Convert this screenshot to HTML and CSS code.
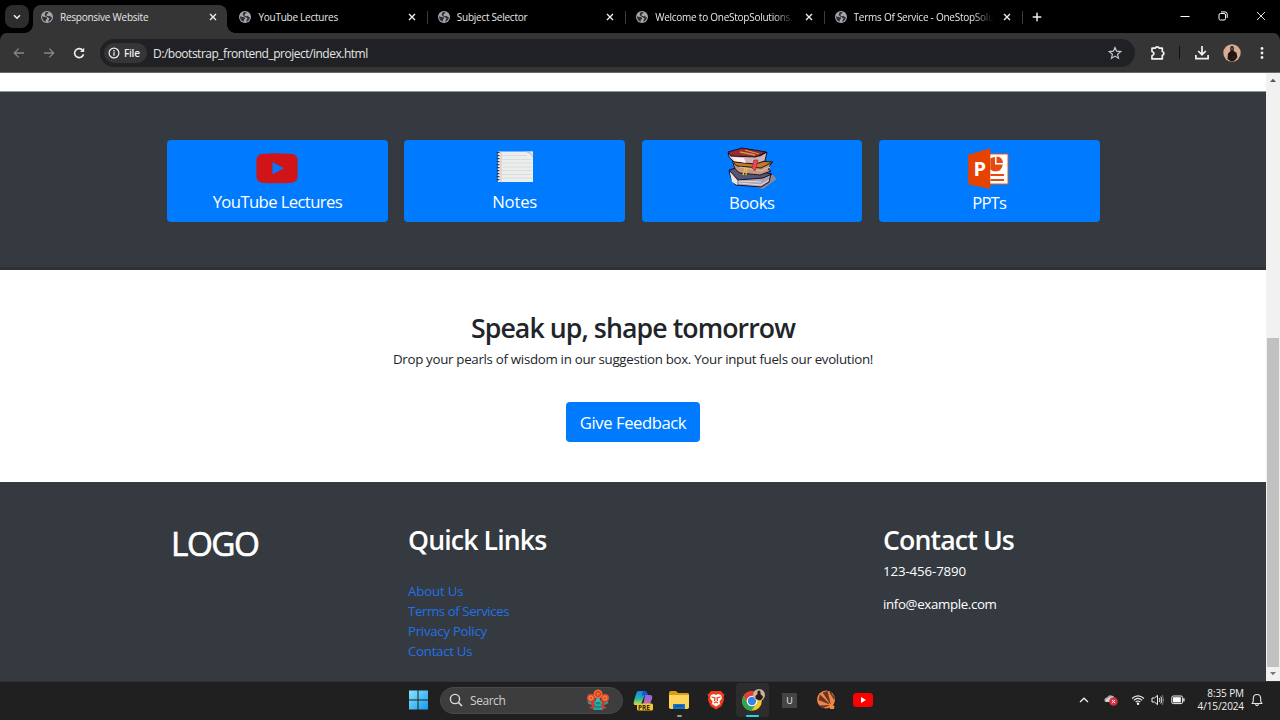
FILE: index.html
```html
<!DOCTYPE html>
<html lang="en">
<head>
<meta charset="utf-8">
<title>Responsive Website</title>
<link rel="stylesheet" href="styles.css">
</head>
<body>
<svg class="defs" aria-hidden="true">
  <symbol id="globe" viewBox="0 0 12 12"><circle cx="6" cy="6" r="6" fill="#a4a8ae"/><path d="M1 5.200 3.800 5.900 5.600 6.300 6.200 7.600 5 8.700 4.500 10.700C2.200 10 1 8.200 1 5.200ZM5 .9 7.600 1.200 7 2.600 5.800 3 5.500 4.600 7 5.200 9 4.700 9.700 6 11 6.500C10.600 8.800 9.100 10.300 7.200 10.900L7.800 8.600 8.500 7.500 6.800 6.200 4.700 5.300 3.700 4.100 4 2.200Z" fill="#303135"/></symbol>
  <symbol id="close" viewBox="0 0 8 8"><path d="M1 1 7 7M7 1 1 7" stroke="#eee" stroke-width="1.400"/></symbol>
</svg>
<header class="browser">
  <div class="tabbar">
    <button class="tab-search"><svg width="8" height="6" viewBox="0 0 8 6"><path d="M1 1.200 4 4.200 7 1.200" fill="none" stroke="#eee" stroke-width="1.600"/></svg></button>
    <div class="tabs">
      <div class="tab active"><svg class="fav"><use href="#globe"/></svg><span>Responsive Website</span><svg class="x"><use href="#close"/></svg></div>
      <div class="tab"><svg class="fav"><use href="#globe"/></svg><span>YouTube Lectures</span><svg class="x"><use href="#close"/></svg></div>
      <div class="tab"><svg class="fav"><use href="#globe"/></svg><span>Subject Selector</span><svg class="x"><use href="#close"/></svg></div>
      <div class="tab"><svg class="fav"><use href="#globe"/></svg><span class="fade">Welcome to OneStopSolutions.</span><svg class="x"><use href="#close"/></svg></div>
      <div class="tab"><svg class="fav"><use href="#globe"/></svg><span class="fade">Terms Of Service - OneStopSolu</span><svg class="x"><use href="#close"/></svg></div>
    </div>
    <svg class="plus" width="10" height="10" viewBox="0 0 10 10"><path d="M5 .7V9.300M.7 5H9.300" stroke="#eee" stroke-width="1.500"/></svg>
    <div class="window-controls">
      <svg width="10" height="10"><path d="M.5 5.500H9.500" stroke="#fff"/></svg>
      <svg width="10" height="10"><rect x="1" y="2.500" width="6.500" height="6.500" rx="1.500" fill="none" stroke="#fff"/><path d="M3 .9H7Q9.200.9 9.200 3V7" fill="none" stroke="#fff"/></svg>
      <svg width="10" height="10"><path d="M1 1 9 9M9 1 1 9" stroke="#ddd"/></svg>
    </div>
  </div>
  <div class="toolbar-back"><div class="toolbar">
    <svg class="nav" width="12" height="12" viewBox="0 0 12 12"><path d="M11 6H1.500M5.600 1.600 1.300 6 5.600 10.400" fill="none" stroke="#85868a" stroke-width="1.300"/></svg>
    <svg class="nav" width="12" height="12" viewBox="0 0 12 12"><path d="M1 6H10.500M6.400 1.600 10.700 6 6.400 10.400" fill="none" stroke="#85868a" stroke-width="1.300"/></svg>
    <svg class="nav" width="12" height="12" viewBox="0 0 12 12"><path d="M10 3.800A4.500 4.500 0 1 0 10.500 7.200" fill="none" stroke="#eee" stroke-width="1.600"/><path d="M11.200.8V5H7Z" fill="#eee"/></svg>
    <div class="omnibox">
      <span class="chip"><svg width="12" height="12" viewBox="0 0 12 12"><circle cx="6" cy="6" r="4.900" fill="none" stroke="#eee" stroke-width="1.200"/><path d="M6 5.300V8.800M6 3.100V4.400" stroke="#eee" stroke-width="1.300"/></svg><span>File</span></span>
      <span class="url">D:/bootstrap_frontend_project/index.html</span>
      <svg class="star" width="14" height="14" viewBox="0 0 14 14"><path d="M7 1.500 8.600 5.200 12.700 5.600 9.600 8.300 10.500 12.200 7 10.100 3.500 12.200 4.400 8.300 1.300 5.600 5.400 5.200Z" fill="none" stroke="#c6c7ca" stroke-width="1.200"/></svg>
    </div>
    <div class="actions">
      <svg width="16" height="16" viewBox="0 0 16 16"><path d="M2 3.200H5.200Q5.600 1.900 7.200 1.900T9.200 3.200H12.300V6.500Q13.900 7 13.900 8.400T12.300 10.200V13.900H2V10.700Q3.900 10.200 3.900 8.600T2 6.500Z" fill="none" stroke="#f1f1f1" stroke-width="1.700" stroke-linejoin="round"/></svg>
      <i class="divider"></i>
      <svg width="16" height="16" viewBox="0 0 16 16"><path d="M8 1V9M4.200 6 8 9.700 11.800 6M1.900 10V13.700H14.100V10" fill="none" stroke="#f1f1f1" stroke-width="1.700"/></svg>
      <svg class="avatar" width="18" height="18" viewBox="0 0 18 18"><circle cx="9" cy="9" r="8.700" fill="#d6ad91"/><path d="M7.200 4Q7.200 2 9 2T10.900 4L10.700 7 13.500 8.800 14.300 13Q12 17.500 8 17.500L4.500 15 5 9.500 7.500 7Z" fill="#211615"/><path d="M8 3.500H10.200V5.500L9 6.500 8 5.500Z" fill="#764836"/><path d="M6 12 9 13.500 12.500 11.800 10 14Z" fill="#553025"/></svg>
      <svg class="dots" width="4" height="14"><circle cx="2" cy="2.500" r="1.400" fill="#eee"/><circle cx="2" cy="7" r="1.400" fill="#eee"/><circle cx="2" cy="11.500" r="1.400" fill="#eee"/></svg>
    </div>
  </div></div>
</header>
<div class="viewport">
  <main>
    <section class="resources">
      <a class="card"><svg width="44" height="36" viewBox="0 0 44 36"><path fill-rule="evenodd" d="M7 4Q22 2.500 37 4 42.300 4.500 42.600 10V26.500Q42.300 32 37 32.700 22 34 7 32.700 1.700 32 1.400 26.500V10Q1.700 4.500 7 4ZM17.500 12.200V24.200L28.800 18.200Z" fill="#d01418"/></svg><span class="c1">YouTube Lectures</span></a>
      <a class="card"><svg class="notebook" width="44" height="36" viewBox="0 0 44 36"><path d="M5 1.500H36L40 5.500V32H5Z" fill="#eceeed"/><path d="M8 1.500V32" stroke="#e3a9a9" stroke-width=".8"/><path d="M9 5.500H34M9 9.500H39M9 13H39M9 17H39M9 20.500H39M9 24.500H39M9 28H39" stroke="#cbd2d2" stroke-width=".6"/><path d="M32 1.500H40V7.500Q38 3.500 32 1.500Z" fill="#bfc2c0"/><path d="M36 1.500H40V5.500Z" fill="#e6e8e7"/><path d="M5 2V32" stroke="#333b48" stroke-width="3" stroke-dasharray="1.200 1.800"/></svg><span>Notes</span></a>
      <a class="card tall"><svg width="50" height="44" viewBox="0 0 50 44"><path d="M34 39 45 27 49.500 32 36 42 28 40Z" fill="#8b8793"/><path d="M2 24 35 29 44 27 42 35 34 40 9 38Q5 36 2 24Z" fill="#aaa2b5" stroke="#171322"/><path d="M2 23 12 20 45 27 36 31 11 33Z" fill="#535675" stroke="#171322"/><path d="M3 25 10 33 10 38 5 35Z" fill="#eee3df"/><path d="M12 36 34 38 42 33M12 34 34 35" fill="none" stroke="#e5dbe0"/><path d="M6 15 34 18 45 15 41 22 44 24 33 28 13 26Q7 23 6 15Z" fill="#c79784" stroke="#241515"/><path d="M5 15 12 13 46 15 34 21 10 19Z" fill="#c57924" stroke="#271717"/><path d="M13 20 34 24 43 20" fill="none" stroke="#d5bcab" stroke-width="1.200"/><path d="M1 6 33 9 40 5 38 14 28 17 7 15Q1 11 1 6Z" fill="#cfb5bb" stroke="#1d1015"/><path d="M1 5 15 1 39 5 29 10 4 9Z" fill="#942d35" stroke="#250d12"/><path d="M4 10 17 11 19 16 8 14Z" fill="#fff1ef"/><path d="M18 3 32 7M13 5 28 8" stroke="#d99a40" stroke-width="1.300"/><path d="M27 13 31 13 28 24 25 21Z" fill="#ef4854" stroke="#992730" stroke-width=".7"/><path d="M18 21 16 28M20 21 19 28" stroke="#efc332" stroke-width="1.300"/></svg><span class="c3">Books</span></a>
      <a class="card"><svg class="powerpoint" width="44" height="44" viewBox="0 0 44 44"><path d="M22 7H41V37H22Z" fill="#fff" stroke="#e05a1b" stroke-width="1"/><path d="M1.200 7.700 23.300 1.200V42L1.200 37.200Z" fill="#e74300"/><path d="M23.300 11.500Q25.500 10 28 10V17.500H35.800Q35 24 28.500 24.500 25.500 24.500 23.300 22.500Z" fill="#e44b12"/><path d="M29.500 9.500Q35.500 9.800 36 16H29.500Z" fill="#e44b12"/><path d="M23.500 28H37M23.500 33H37" stroke="#e44b12" stroke-width="1.800"/><text class="pp-letter" x="6.500" y="29">P</text></svg><span class="c4">PPTs</span></a>
    </section>
    <section class="feedback">
      <h2>Speak up, shape tomorrow</h2>
      <p>Drop your pearls of wisdom in our suggestion box. Your input fuels our evolution!</p>
      <button><span>Give Feedback</span></button>
    </section>
    <footer>
      <div class="logo">LOGO</div>
      <div><h3>Quick Links</h3><nav><a class="l1">About Us</a><a class="l2">Terms of Services</a><a class="l3">Privacy Policy</a><a class="l4">Contact Us</a></nav></div>
      <div class="contact"><h3>Contact Us</h3><p class="phone">123-456-7890</p><p class="email">info@example.com</p></div>
    </footer>
  </main>
  <div class="scrollbar">
    <svg width="8" height="5"><path d="M4 .7 7 4H1Z" fill="#555"/></svg><i class="thumb"></i><svg width="8" height="5"><path d="M4 4.300 7 1H1Z" fill="#777"/></svg>
  </div>
</div>
<div class="taskbar">
  <div class="apps">
    <svg class="windows" width="20" height="20"><defs><linearGradient id="win" x1="0" y1="0" x2="1" y2="1"><stop stop-color="#88e5ff"/><stop offset="1" stop-color="#1599ed"/></linearGradient></defs><path d="M1 .5H9.500V9.500H1ZM10.500.5H20V9.500H10.500ZM1 10.500H9.500V19.500H1ZM10.500 10.500H20V19.500H10.500Z" fill="url(#win)"/></svg>
    <div class="search"><svg width="14" height="14"><circle cx="6" cy="6" r="4.600" fill="none" stroke="#ddd" stroke-width="1.400"/><path d="M9.500 9.500 13 13" stroke="#ddd" stroke-width="1.600"/></svg><span>Search</span>
      <svg class="ornament" width="24" height="22" viewBox="0 0 24 22"><circle cx="5" cy="9" r="4" fill="#e84837"/><circle cx="19" cy="9" r="4" fill="#e84837"/><circle cx="12" cy="5" r="4.500" fill="#f36833"/><circle cx="12" cy="5" r="2.400" fill="none" stroke="#b83225"/><circle cx="5" cy="9" r="2" fill="none" stroke="#ef9a36"/><circle cx="19" cy="9" r="2" fill="none" stroke="#ef9a36"/><path d="M4 14 7 11H17L20 14 18 17 21 19 17 20H7L3 19 6 17Z" fill="#c83b39"/><path d="M8 13 12 10 16 13 15 17 17 21H7L9 17Z" fill="#20a99b"/><circle cx="12" cy="11" r="2.300" fill="#40b69d"/><path d="M10 14H14M9 18H15" stroke="#176779"/><path d="M2 13 5 15M22 13 19 15" stroke="#32aa8a" stroke-width="2"/></svg>
    </div>
    <svg class="copilot" width="22" height="22" viewBox="0 0 22 22"><defs><linearGradient id="co1" x2="0" y2="1"><stop stop-color="#237cee"/><stop offset=".55" stop-color="#22bba3"/><stop offset="1" stop-color="#d7dc3b"/></linearGradient><linearGradient id="co2" x2="0" y2="1"><stop stop-color="#8067ef"/><stop offset="1" stop-color="#ef6692"/></linearGradient></defs><path d="M6 2H12Q14 2 13 5L10 13Q9 16 6 16H3Q1 16 2 12L4 5Q5 2 6 2Z" fill="url(#co1)"/><path d="M13 6H18Q21 6 20 10L18 15Q17 18 14 18H8Q11 17 12 12Z" fill="url(#co2)"/><path d="M11 2H13Q15 2 16 6H12Q10 6 9 9Z" fill="#1857cf"/><rect x="5" y="14.500" width="16" height="7" rx="1.500" fill="#f6c72b"/><text class="pre" x="6" y="20.500">PRE</text></svg>
    <div class="app folder"><svg width="22" height="20"><path d="M1 3Q1 1 3 1H8L10 3H20Q21 3 21 5V18H1Z" fill="#d99c18"/><path d="M1 5H21V17Q21 19 19 19H3Q1 19 1 17Z" fill="#ffd45b"/><path d="M5 14H17V19H5Z" fill="#1676c6"/><path d="M7 16H15" stroke="#0b569b" stroke-width="1.500"/></svg><i></i></div>
    <svg class="brave" width="18" height="20"><path d="M4 1H14L15.500 3 17.500 4.500 16.500 7 17 10 14.500 16 9 19.500 3.500 16 1 10 1.500 7 .5 4.500 2.500 3Z" fill="#f33d1b"/><path d="M4 5 7 4 9 5 11 4 14 5 15 8 12.500 11.500 13 14 9 16.500 5 14 5.500 11.500 3 8Z" fill="#fff"/><path d="M4.500 7 8 8 7.500 11M13.500 7 10 8 10.500 11M7 13 9 12 11 13" fill="none" stroke="#f33d1b" stroke-width="1.300"/></svg>
    <div class="app chrome"><svg width="24" height="22" viewBox="0 0 24 22"><circle cx="11" cy="12" r="9.800" fill="#f4c429"/><path d="M2.500 7A9.800 9.800 0 0 1 19.500 7H11L7 14Z" fill="#e23f32"/><path d="M2.500 7 7.500 15H15L10.500 21.800A9.800 9.800 0 0 1 2.500 7Z" fill="#31a353"/><circle cx="11" cy="12" r="5.300" fill="#fff"/><circle cx="11" cy="12" r="4.200" fill="#3484e9"/><circle cx="18" cy="6" r="6" fill="#cbb49e"/><path d="M16.500 5V2.500Q18 .5 19.500 2.500V5L22 7.500Q21.500 11 18 11.200L14.500 9.500 14.500 7Z" fill="#281b19"/></svg><i></i></div>
    <span class="u-app">U</span>
    <svg class="orange" width="20" height="20"><circle cx="10" cy="9.500" r="9" fill="#ee8648"/><path d="M2.500 10 15 15 4 4.500ZM6.500 2.500 15 15 11.500 1ZM3 15.500 15 15 7 18Z" fill="#693524"/><path d="M14 2 18.500 9" stroke="#693524" stroke-width="1.400"/><path d="M13 13 18.500 16 18 19H14Z" fill="#f38a40"/></svg>
    <svg class="youtube" width="20" height="16"><rect y="1" width="20" height="14" rx="3.500" fill="#f00"/><path d="M8 5V11L13 8Z" fill="#fff"/></svg>
  </div>
  <div class="tray">
    <svg class="chevron" width="10" height="6"><path d="M1 5 5 1.200 9 5" fill="none" stroke="#eee" stroke-width="1.300"/></svg>
    <svg class="cloud" width="16" height="14"><path d="M2 9Q0 5 4 4.500 6 1 10 3 12 4 12 7V9Z" fill="#a8a8a8"/><path d="M3 6 10 3 12 7V9H3Z" fill="#d2d2d2"/><circle cx="10.500" cy="8.500" r="4.300" fill="#d72f42"/><path d="M8.900 6.900 12.100 10.100M12.100 6.900 8.900 10.100" stroke="#fff"/></svg>
    <svg class="wifi" width="14" height="12"><path d="M1 4.500Q7-.8 13 4.500M2.800 6.300Q7 2.300 11.200 6.300M4.700 8.200Q7 5.700 9.300 8.200" fill="none" stroke="#eee" stroke-width="1.100"/><circle cx="7" cy="9.800" r="1.200" fill="#fff"/></svg>
    <svg class="sound" width="14" height="12"><path d="M1 4H3.500L6.500 1.300V10.700L3.500 8H1Z" fill="none" stroke="#eee"/><path d="M8.200 4Q9.800 6 8.200 8M9.800 2.500Q12 6 9.800 9.500" fill="none" stroke="#eee"/><path d="M11.300 1Q14 6 11.300 11" fill="none" stroke="#777"/></svg>
    <svg class="battery" width="14" height="10"><rect x=".8" y="1" width="10.800" height="7.600" rx="1.500" fill="none" stroke="#eee"/><rect x="2" y="2.200" width="7.800" height="5.200" fill="#fff"/><path d="M12.900 3.200V6.400" stroke="#eee" stroke-width="1.300"/></svg>
    <div class="clock"><span>8:35 PM</span><span>4/15/2024</span></div>
    <svg class="bell" width="12" height="14"><path d="M1 10.500H11L9.700 8.500V5.500Q9.700 1.500 6 1.500T2.300 5.500V8.500ZM4.500 10.800Q4.700 12.600 6 12.600T7.500 10.800" fill="none" stroke="#e7e7e7" stroke-width="1.100" stroke-linejoin="round"/></svg>
  </div>
</div>
</body>
</html>
```
FILE: styles.css
```css
* { box-sizing: border-box; }
body { margin: 0; width: 1280px; height: 720px; overflow: hidden; font-family: "Open Sans", "Noto Sans", sans-serif; background: #fff; }
h2, h3, p { margin: 0; }
button { border: 0; padding: 0; font-family: inherit; }
svg { display: block; flex-shrink: 0; }
.defs { position: absolute; width: 0; height: 0; }
.browser { height: 73px; background: #000; border-bottom: 1px solid #696969; }
.tabbar { height: 33px; display: flex; align-items: flex-start; padding-left: 5px; }
.tab-search { width: 24px; height: 23px; margin-top: 5px; border-radius: 8px; background: #2d2d2d; display: flex; align-items: center; justify-content: center; }
.tabs { display: flex; margin-left: 4px; }
.tab { width: 198.400px; height: 28px; margin-top: 5px; display: flex; align-items: center; padding: 0 14px 5px 8px; color: #e8e8e8; font-size: 10px; letter-spacing: -.25px; position: relative; }
.tab span { width: 144px; margin-left: 7px; white-space: nowrap; }
.tab .fade { -webkit-mask-image: linear-gradient(to right, #000 82%, transparent 97%); mask-image: linear-gradient(to right, #000 82%, transparent 97%); }
.fav { width: 12px; height: 12px; }
.x { width: 8px; height: 8px; margin-left: auto; }
.tab:not(.active)::after { content: ""; position: absolute; right: 2px; top: 6px; width: 1px; height: 13px; background: #3b3b3b; }
.active::before { content: ""; position: absolute; z-index: 0; left: 0; right: 4px; top: 0; bottom: 0; border-radius: 8px 8px 0 0; background: #353535; }
.active::after { content: ""; position: absolute; left: -8px; right: -4px; bottom: 0; height: 8px; background: radial-gradient(circle at 0 0, transparent 7.500px, #353535 8px) left / 8px 8px no-repeat, radial-gradient(circle at 100% 0, transparent 7.500px, #353535 8px) right / 8px 8px no-repeat; }
.active > * { z-index: 1; }
.plus { margin: 12px 0 0 7px; }
.window-controls { display: flex; gap: 28px; margin: 11px 14px 0 auto; }
.toolbar-back { background: #000; }
.toolbar { height: 39px; border-radius: 7px 7px 0 0; background: #353535; display: flex; align-items: center; padding-left: 13px; }
.nav { margin-right: 18px; }
.omnibox { height: 28px; width: 1035px; margin-left: -3px; border-radius: 14px; background: #202124; display: flex; align-items: center; padding: 0 13px 0 4px; }
.chip { width: 43px; height: 20px; border-radius: 10px; background: #353538; display: flex; align-items: center; gap: 4px; padding-left: 4px; color: #eee; font-size: 10px; font-weight: 600; letter-spacing: -.25px; }
.url { margin: 1px 0 0 6px; color: #e6e6e6; font-size: 12px; letter-spacing: -.49px; white-space: nowrap; }
.star { margin-left: auto; }
.actions { display: flex; align-items: center; margin-left: 15px; }
.divider { width: 1px; height: 13px; background: #111; margin: 0 14px 0 13px; }
.avatar { margin-left: 13px; }
.dots { margin-left: 19px; }
.viewport { height: 608px; display: flex; }
main { width: 1266px; }
.resources { height: 179px; margin-top: 18px; padding: 49px 166.500px 0 167px; display: flex; gap: 16.500px; background: #343a40; border-top: 1px solid #92949b; border-bottom: 3px solid #303038; align-items: flex-start; }
.card { height: 81.500px; flex: 1; border-radius: 4px; background: #007bff; display: flex; flex-direction: column; align-items: center; padding-top: 10px; color: #fff; font-size: 16.700px; line-height: 25px; margin-top: -1px; }
.card span { margin-top: 3px; white-space: nowrap; letter-spacing: -.2px; }
.card.tall { padding-top: 7px; height: 82px; }
.card.tall .c3 { margin-top: -1px; letter-spacing: -.4px; }
.card .powerpoint { margin-top: -3px; }
.card .c4 { margin-top: -1px; letter-spacing: -.9px; }
.notebook { margin-left: 1px; }
.pp-letter { font: bold 20px "Open Sans", sans-serif; fill: #fff; }
.card .c1 { letter-spacing: -.62px; }
.feedback { height: 212px; display: flex; flex-direction: column; align-items: center; padding-top: 40px; color: #212529; }
h2, h3 { font-size: 26.700px; line-height: 35px; font-weight: 600; }
h2 { letter-spacing: -.92px; white-space: nowrap; }
.feedback p { font-size: 13.300px; line-height: 20px; margin-top: 4px; letter-spacing: -.3px; white-space: nowrap; }
.feedback button { width: 134px; height: 40px; margin-top: 33px; border-radius: 4px; background: #007bff; color: #fff; font-size: 16.700px; white-space: nowrap; letter-spacing: -.45px; }
footer { height: 199px; background: #343a40; padding: 40px 0 0 172px; display: grid; grid-template-columns: 236px 475px 1fr; color: #fff; font-size: 13.300px; line-height: 20px; }
.logo { font-size: 33.300px; line-height: 42px; -webkit-text-stroke: .7px #fff; letter-spacing: -1.500px; margin-left: -1px; }
h3 { letter-spacing: -.88px; }
nav { display: flex; flex-direction: column; margin-top: 24px; color: #2271e8; }
.l1 { letter-spacing: -.2px; }
.l2 { letter-spacing: -.44px; }
.l3, .l4 { letter-spacing: -.3px; }
.phone { margin-top: 4px; letter-spacing: -.13px; }
.email { margin-top: 13px; letter-spacing: -.35px; }
.scrollbar { width: 14px; background: #f1f1f1; padding: 5px 0 5px; display: flex; flex-direction: column; align-items: center; }
.thumb { width: 12px; height: 329px; margin: 255px 0 auto; background: #c1c1c1; }
.taskbar { height: 39px; background: #202020; border-top: 1px solid #303236; display: flex; align-items: center; padding: 0 0 2px 408px; }
.apps, .tray { display: flex; align-items: center; }
.search { width: 183px; height: 27px; margin-left: 12px; border-radius: 14px; background: #3d3d3d; border: 1px solid #494949; display: flex; align-items: center; padding: 0 12px 0 8px; color: #cfcfcf; font-size: 12px; letter-spacing: -.45px; }
.search span { margin-left: 7px; }
.ornament { margin-left: auto; }
.copilot { margin-left: 9px; }
.pre { font: bold 6.500px "Open Sans", sans-serif; fill: #302517; }
.app { height: 34px; display: flex; flex-direction: column; align-items: center; justify-content: center; position: relative; }
.app i { position: absolute; bottom: 0; height: 2px; border-radius: 1px; }
.folder { margin-left: 14px; }
.folder i { width: 5px; background: #999; }
.brave { margin-left: 17px; }
.chrome { width: 33px; margin-left: 11px; border-radius: 4px; background: #2d2d2d; }
.chrome i { width: 13px; background: #20dbe5; }
.u-app { width: 15px; height: 15px; background: #444; color: #eee; font-size: 9px; line-height: 15px; text-align: center; margin-left: 13px; }
.orange { margin-left: 19px; }
.youtube { margin-left: 17px; }
.tray { margin-left: auto; padding-right: 17px; color: #f0f0f0; }
.cloud { margin-left: 14px; }
.wifi { margin-left: 12px; }
.sound { margin-left: 6px; }
.battery { margin-left: 6px; }
.clock { width: 48px; margin-left: 11px; display: flex; flex-direction: column; align-items: flex-end; font-size: 10px; line-height: 13px; letter-spacing: -.1px; white-space: nowrap; }
.bell { margin-left: 7px; }
```
